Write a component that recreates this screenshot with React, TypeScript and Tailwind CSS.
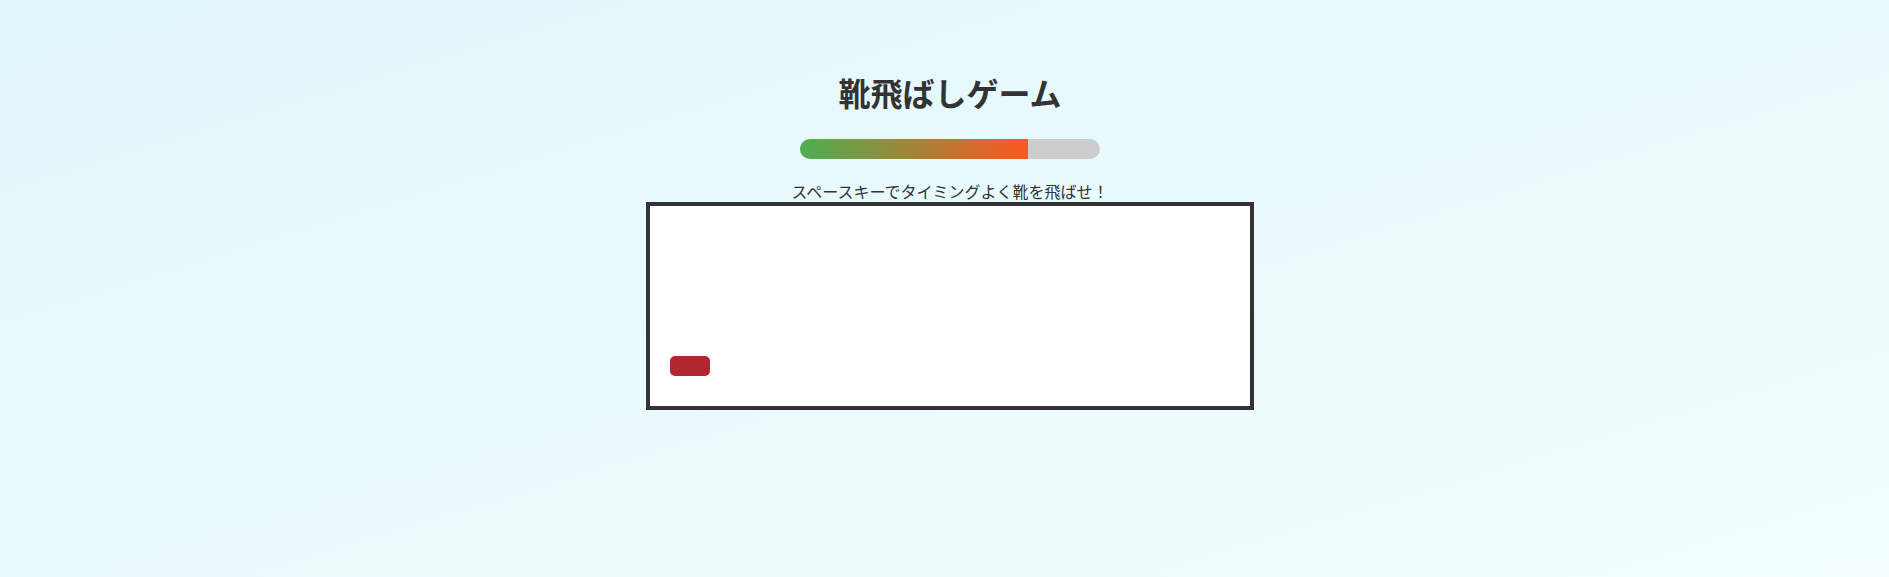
import React from "react";

const power = 76;

export default function App() {
  return (
    <div
      className="w-full h-[577px] pl-[11px] bg-gradient-to-br from-[#dff6fa] to-[#f4fefe] flex flex-col items-center text-[#333]"
      style={{ fontFamily: '"Noto Sans CJK JP", "Noto Sans", sans-serif' }}
    >
      <h1 className="mt-[72px] text-[32px] leading-[40px] font-bold">靴飛ばしゲーム</h1>

      {/* power gauge */}
      <div className="mt-[27px] w-[300px] h-[20px] rounded-full bg-[#cccccc] overflow-hidden">
        <div
          className="h-full bg-linear-to-r/srgb from-[#4caf50] to-[#ff5722]"
          style={{ width: `${power}%` }}
        />
      </div>

      <p className="mt-[22px] text-[16px] leading-[20px]">スペースキーでタイミングよく靴を飛ばせ！</p>

      <div className="mt-[1px] w-[608px] h-[208px] border-4 border-[#333] bg-white">
        <div className="ml-[20px] mt-[150px] w-[40px] h-[20px] rounded-[5px] bg-[#ae282e]" />
      </div>
    </div>
  );
}
